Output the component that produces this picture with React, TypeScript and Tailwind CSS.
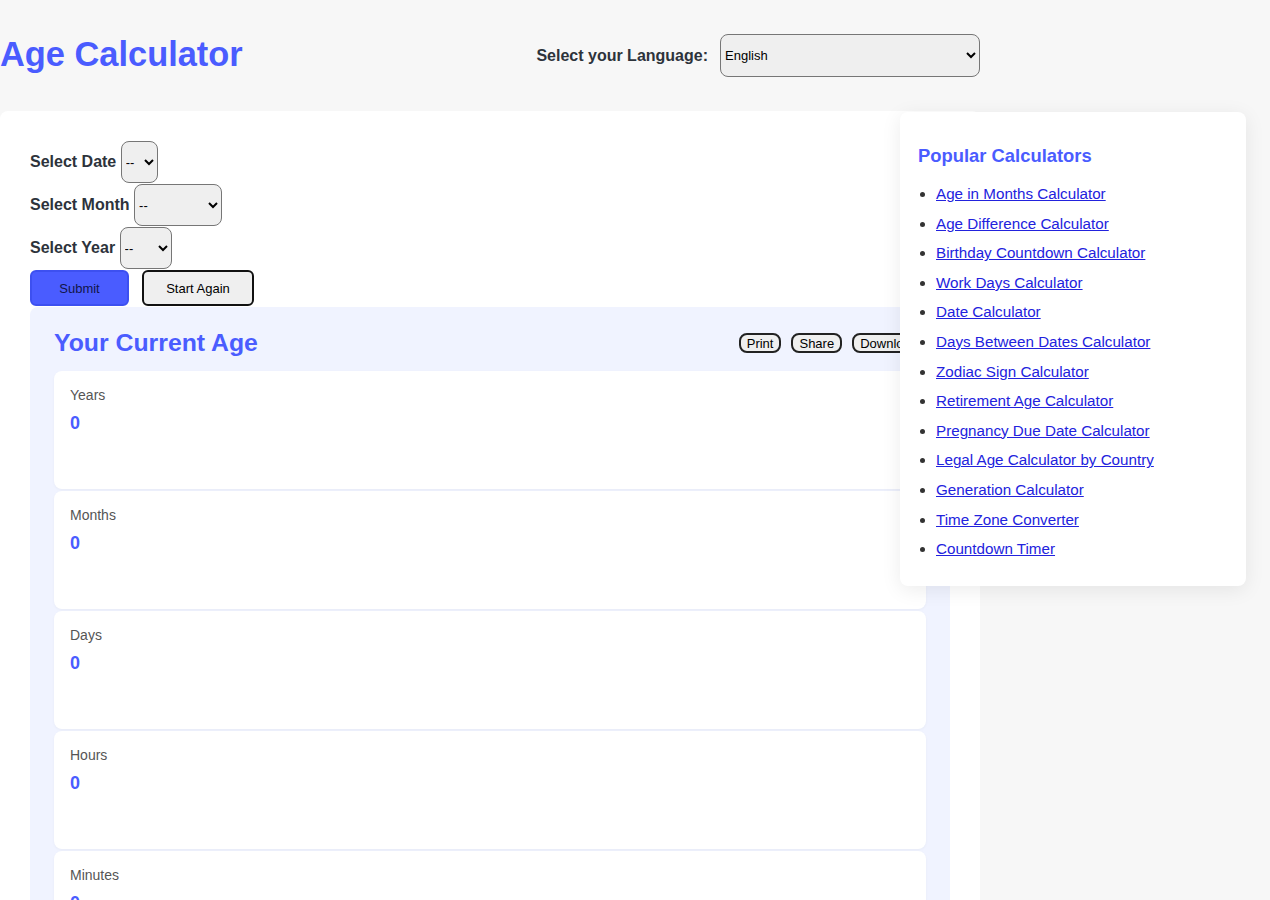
import React from "react";

const links = [
  "Age in Months Calculator",
  "Age Difference Calculator",
  "Birthday Countdown Calculator",
  "Work Days Calculator",
  "Date Calculator",
  "Days Between Dates Calculator",
  "Zodiac Sign Calculator",
  "Retirement Age Calculator",
  "Pregnancy Due Date Calculator",
  "Legal Age Calculator by Country",
  "Generation Calculator",
  "Time Zone Converter",
  "Countdown Timer",
];

const units = ["Years", "Months", "Days", "Hours", "Minutes", "Seconds"];

export default function App() {
  return (
    <div
      className="relative min-h-screen bg-[#f7f7f7] text-[#333]"
      style={{ fontFamily: '"Liberation Sans", Arial, sans-serif' }}
    >
      <header className="flex h-[111px] w-[980px] items-center justify-between">
        <h1 className="-mt-[2px] text-[34.4px] font-bold leading-none text-[#4a5cff]">Age Calculator</h1>
        <div className="flex items-center gap-[12px]">
          <label className="text-[16px] font-bold text-[#2d333b]">Select your Language:</label>
          <select className="h-[43px] w-[260px] rounded-[8px] border border-[#767676] bg-[#efefef] text-[13px] text-black">
            <option>English</option>
          </select>
        </div>
      </header>

      <main className="w-[980px] rounded-t-[8px] bg-white px-[30px] pt-[30px] pb-[30px]">
        <div className="flex flex-col gap-px">
          <div className="flex items-center gap-[4.5px]">
            <span className="text-[16px] font-bold text-[#2d333b]">Select Date</span>
            <select className="h-[42px] w-[37px] rounded-[8px] border border-[#767676] bg-[#efefef] text-[13px] text-black">
              <option>--</option>
            </select>
          </div>
          <div className="flex items-center gap-[4.5px]">
            <span className="text-[16px] font-bold text-[#2d333b]">Select Month</span>
            <select className="h-[42px] w-[88px] rounded-[8px] border border-[#767676] bg-[#efefef] text-[13px] text-black">
              <option>--</option>
            </select>
          </div>
          <div className="flex items-center gap-[4.5px]">
            <span className="text-[16px] font-bold text-[#2d333b]">Select Year</span>
            <select className="h-[42px] w-[52px] rounded-[8px] border border-[#767676] bg-[#efefef] text-[13px] text-black">
              <option>--</option>
            </select>
          </div>
          <div className="flex items-center gap-[13px]">
            <button className="h-[36px] w-[99px] rounded-[6px] border-2 border-[#3d50f0] bg-[#4a5cff] pt-[1px] text-[13px] text-[#12164a]">
              Submit
            </button>
            <button className="h-[36px] w-[112px] rounded-[6px] border-2 border-[#111] bg-[#efefef] pt-[1px] text-[13px] text-black">
              Start Again
            </button>
          </div>

          <section className="w-[920px] rounded-[8px] bg-[#f0f3ff] p-[24px]">
            <div className="flex h-[24px] items-center justify-between">
              <h2 className="text-[24.8px] font-bold leading-[24px] text-[#4a5cff]">Your Current Age</h2>
              <div className="flex gap-[10px]">
                {["Print", "Share", "Download"].map((b) => (
                  <button
                    key={b}
                    className="h-[20px] rounded-[8px] border-2 border-[#222] bg-[#efefef] px-[6px] text-[13px] leading-none text-black"
                  >
                    {b}
                  </button>
                ))}
              </div>
            </div>
            <div className="mt-[16px] flex flex-col gap-[2px]">
              {units.map((u) => (
                <div
                  key={u}
                  className="h-[118px] rounded-[8px] bg-white px-[16px] pt-[15px] shadow-[0_1px_3px_rgba(0,0,0,0.04)]"
                >
                  <div className="text-[14px] leading-[18px] text-[#555]">{u}</div>
                  <div className="mt-[8px] text-[18px] font-bold leading-[22px] text-[#4a5cff]">0</div>
                </div>
              ))}
            </div>
          </section>
        </div>
      </main>

      <aside className="absolute left-[900px] top-[112px] w-[346px] rounded-[8px] bg-white px-[18px] pt-[33px] pb-[22px] shadow-[0_4px_20px_rgba(0,0,0,0.08)]">
        <h3 className="text-[18.4px] font-bold leading-[22px] text-[#4a5cff]">Popular Calculators</h3>
        <ul className="mt-[12px] list-disc pl-[18px] text-[15.2px] marker:text-[#333]">
          {links.map((l) => (
            <li key={l} className="leading-[29.6px]">
              <a href="#" className="text-[#2222dd] underline">
                {l}
              </a>
            </li>
          ))}
        </ul>
      </aside>
    </div>
  );
}
